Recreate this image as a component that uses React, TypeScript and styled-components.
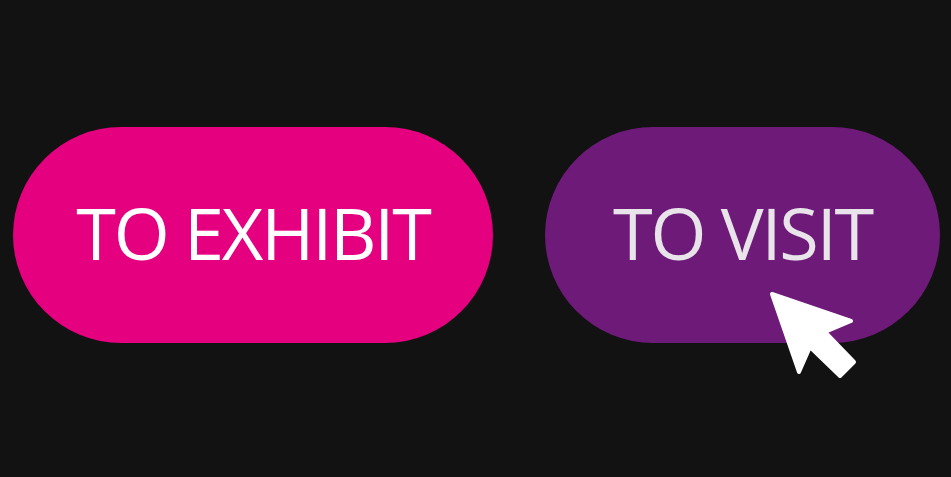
import React from "react";
import styled, { createGlobalStyle } from "styled-components";

const Global = createGlobalStyle`
  html, body { margin: 0; padding: 0; background: #121212; }
  body { width: 951px; height: 477px; overflow: hidden; }
`;

const Stage = styled.main`
  box-sizing: border-box;
  width: 951px;
  height: 477px;
  padding: 127px 0 0 13px;
  display: flex;
  align-items: flex-start;
  gap: 52px;
  background: #121212;
`;

const Pill = styled.button<{ $bg: string; $fg: string; $w: number }>`
  position: relative;
  box-sizing: border-box;
  width: ${(p) => p.$w}px;
  height: 216px;
  border: none;
  border-radius: 108px;
  background: ${(p) => p.$bg};
  color: ${(p) => p.$fg};
  font-family: "Open Sans", "Noto Sans", sans-serif;
  font-size: 72px;
  font-weight: 400;
  letter-spacing: -2.2px;
  display: flex;
  align-items: center;
  justify-content: center;
  padding: 0 0 6px;
  cursor: pointer;
`;

const Cursor = styled.svg`
  position: absolute;
  left: 223px;
  top: 163px;
  width: 92px;
  height: 92px;
  overflow: visible;
`;

export default function App() {
  return (
    <>
      <Global />
      <Stage>
        <Pill $bg="#e5007f" $fg="#ffffff" $w={480}>
          TO EXHIBIT
        </Pill>
        <Pill $bg="#6e1a78" $fg="#e8e4ea" $w={395}>
          TO VISIT
          <Cursor viewBox="0 0 92 92">
            <path
              d="M4 4 L83 31 L57 42 L86 72 L72 86 L42 57 L31 82 Z"
              fill="#ffffff"
              stroke="#ffffff"
              strokeWidth="4"
              strokeLinejoin="round"
            />
          </Cursor>
        </Pill>
      </Stage>
    </>
  );
}
